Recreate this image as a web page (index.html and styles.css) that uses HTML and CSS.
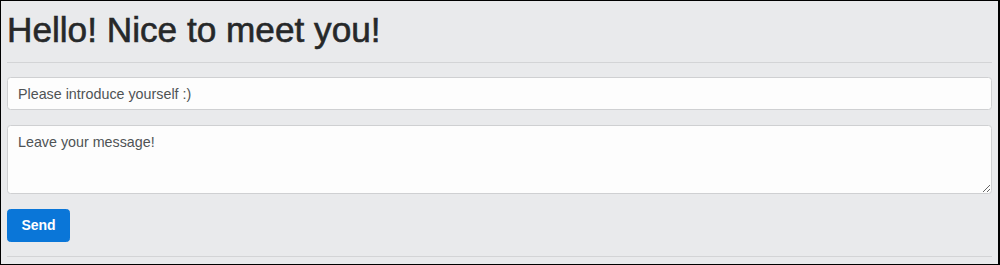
FILE: index.html
```html
<!DOCTYPE html>
<html lang="en">
<head>
<meta charset="utf-8">
<title>Hello</title>
<link rel="stylesheet" href="styles.css">
</head>
<body>
<div class="frame">
  <h1 class="title">Hello! Nice to meet you!</h1>
  <hr class="rule">
  <form class="form">
    <input class="field" type="text" placeholder="Please introduce yourself :)">
    <textarea class="field area" rows="3" placeholder="Leave your message!"></textarea>
    <div class="actions"><button class="btn" type="button">Send</button></div>
  </form>
  <hr class="rule bottom">
</div>
</body>
</html>
```

FILE: styles.css
```css
html, body {
  margin: 0;
  padding: 0;
  background: #000;
}
.frame {
  box-sizing: border-box;
  width: 1000px;
  height: 265px;
  border-top: 1px solid #000;
  border-left: 1px solid #000;
  border-bottom: 1px solid #000;
  border-right: 2px solid #000;
  background: #e9eaec;
  padding: 9px 6px 0 6px;
  font-family: "Liberation Sans", Arial, sans-serif;
  color: #292b2c;
  overflow: hidden;
}
.title {
  margin: 0;
  font-size: 35.2px;
  line-height: 40px;
  font-weight: normal;
  color: #262829;
  -webkit-text-stroke: 0.6px #262829;
}
.rule {
  margin: 12px 0 14px 0;
  border: 0;
  border-top: 1px solid #d3d4d6;
  height: 0;
}
.rule.bottom {
  margin: 14px 0 0 0;
}
.form {
  display: flex;
  flex-direction: column;
  gap: 15px;
  margin: 0;
}
.field {
  box-sizing: border-box;
  display: block;
  width: 100%;
  margin: 0;
  padding: 7px 10px;
  font-family: "Liberation Sans", Arial, sans-serif;
  font-size: 14.3px;
  line-height: 17px;
  height: 33px;
  color: #464a4c;
  background: #fdfdfd;
  border: 1px solid #cfd0d2;
  border-radius: 3.5px;
  outline: none;
}
.field::placeholder {
  color: #4f5355;
  opacity: 1;
}
.area {
  height: 69px;
  resize: vertical;
  padding-top: 8px;
}
.actions {
  display: flex;
}
.btn {
  box-sizing: border-box;
  height: 33px;
  width: 63px;
  padding: 0;
  font-family: "Liberation Sans", Arial, sans-serif;
  font-size: 14px;
  font-weight: bold;
  line-height: 17px;
  color: #fff;
  background: #0a76d8;
  border: 1px solid #0a76d8;
  border-radius: 3.5px;
  cursor: pointer;
}
```
